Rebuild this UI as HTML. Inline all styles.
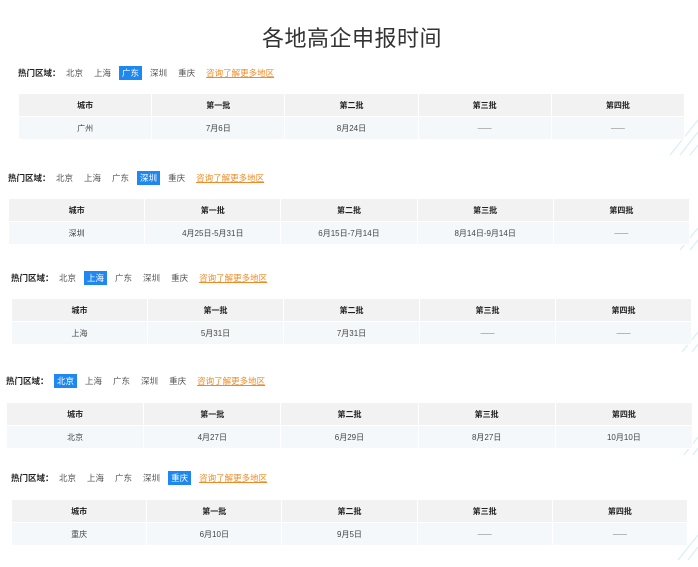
<!DOCTYPE html>
<html><head><meta charset="utf-8"><style>
*{margin:0;padding:0;box-sizing:border-box}
body{width:698px;height:567px;background:#fff;position:relative;overflow:hidden;font-family:"Liberation Sans","Noto Sans CJK SC",sans-serif;color:#333}
h1{position:absolute;left:0;width:704px;top:21px;text-align:center;font-size:22px;font-weight:normal;color:#333;letter-spacing:0.5px}
.nav{position:absolute;height:14px;font-size:8.5px;line-height:14px;white-space:nowrap}
.nav b{display:inline-block;width:48px;font-weight:bold;color:#222}
.nav span{display:inline-block;margin-right:11px;color:#555}
.nav span.on{background:#1e88f0;color:#fff;padding:0 3px;margin-left:-3px;margin-right:8px}
.nav a{color:#f08a24;text-decoration:underline}
table{position:absolute;border-collapse:collapse;table-layout:fixed;font-size:8px}
td,th{border:1px solid #fff;text-align:center;height:23px}
th{background:#f2f2f2;font-weight:bold;color:#222}
td{background:#f5f8fa;color:#444}
td.d{font-size:7px;color:#777}
svg{position:absolute;left:0;top:0}
</style></head><body>
<svg width="698" height="567"><g stroke="#d6eff5" stroke-width="1.2">
<line x1="670" y1="155" x2="698" y2="120"/><line x1="680" y1="155" x2="698" y2="132"/><line x1="690" y1="155" x2="698" y2="145"/>
<line x1="680" y1="250" x2="698" y2="228"/><line x1="690" y1="250" x2="698" y2="240"/>
<line x1="682" y1="352" x2="698" y2="332"/><line x1="692" y1="352" x2="698" y2="344"/>
<line x1="684" y1="455" x2="698" y2="437"/><line x1="693" y1="455" x2="698" y2="448"/>
<line x1="678" y1="560" x2="698" y2="535"/><line x1="688" y1="560" x2="698" y2="547"/>
</g></svg>
<h1>各地高企申报时间</h1>

<div class="nav" style="left:18px;top:66px"><b>热门区域：</b><span>北京</span><span>上海</span><span class="on">广东</span><span>深圳</span><span>重庆</span><a>咨询了解更多地区</a></div>
<table style="left:18px;top:93px;width:667px"><tr><th>城市</th><th>第一批</th><th>第二批</th><th>第三批</th><th>第四批</th></tr><tr><td>广州</td><td>7月6日</td><td>8月24日</td><td class="d">——</td><td class="d">——</td></tr></table>

<div class="nav" style="left:8px;top:171px"><b>热门区域：</b><span>北京</span><span>上海</span><span>广东</span><span class="on">深圳</span><span>重庆</span><a>咨询了解更多地区</a></div>
<table style="left:8px;top:198px;width:682px"><tr><th>城市</th><th>第一批</th><th>第二批</th><th>第三批</th><th>第四批</th></tr><tr><td>深圳</td><td>4月25日-5月31日</td><td>6月15日-7月14日</td><td>8月14日-9月14日</td><td class="d">——</td></tr></table>

<div class="nav" style="left:11px;top:271px"><b>热门区域：</b><span>北京</span><span class="on">上海</span><span>广东</span><span>深圳</span><span>重庆</span><a>咨询了解更多地区</a></div>
<table style="left:11px;top:298px;width:681px"><tr><th>城市</th><th>第一批</th><th>第二批</th><th>第三批</th><th>第四批</th></tr><tr><td>上海</td><td>5月31日</td><td>7月31日</td><td class="d">——</td><td class="d">——</td></tr></table>

<div class="nav" style="left:6px;top:374px"><b>热门区域：</b><span class="on" style="margin-left:0">北京</span><span>上海</span><span>广东</span><span>深圳</span><span>重庆</span><a>咨询了解更多地区</a></div>
<table style="left:6px;top:402px;width:687px"><tr><th>城市</th><th>第一批</th><th>第二批</th><th>第三批</th><th>第四批</th></tr><tr><td>北京</td><td>4月27日</td><td>6月29日</td><td>8月27日</td><td>10月10日</td></tr></table>

<div class="nav" style="left:11px;top:471px"><b>热门区域：</b><span>北京</span><span>上海</span><span>广东</span><span>深圳</span><span class="on">重庆</span><a>咨询了解更多地区</a></div>
<table style="left:11px;top:499px;width:677px"><tr><th>城市</th><th>第一批</th><th>第二批</th><th>第三批</th><th>第四批</th></tr><tr><td>重庆</td><td>6月10日</td><td>9月5日</td><td class="d">——</td><td class="d">——</td></tr></table>
</body></html>
